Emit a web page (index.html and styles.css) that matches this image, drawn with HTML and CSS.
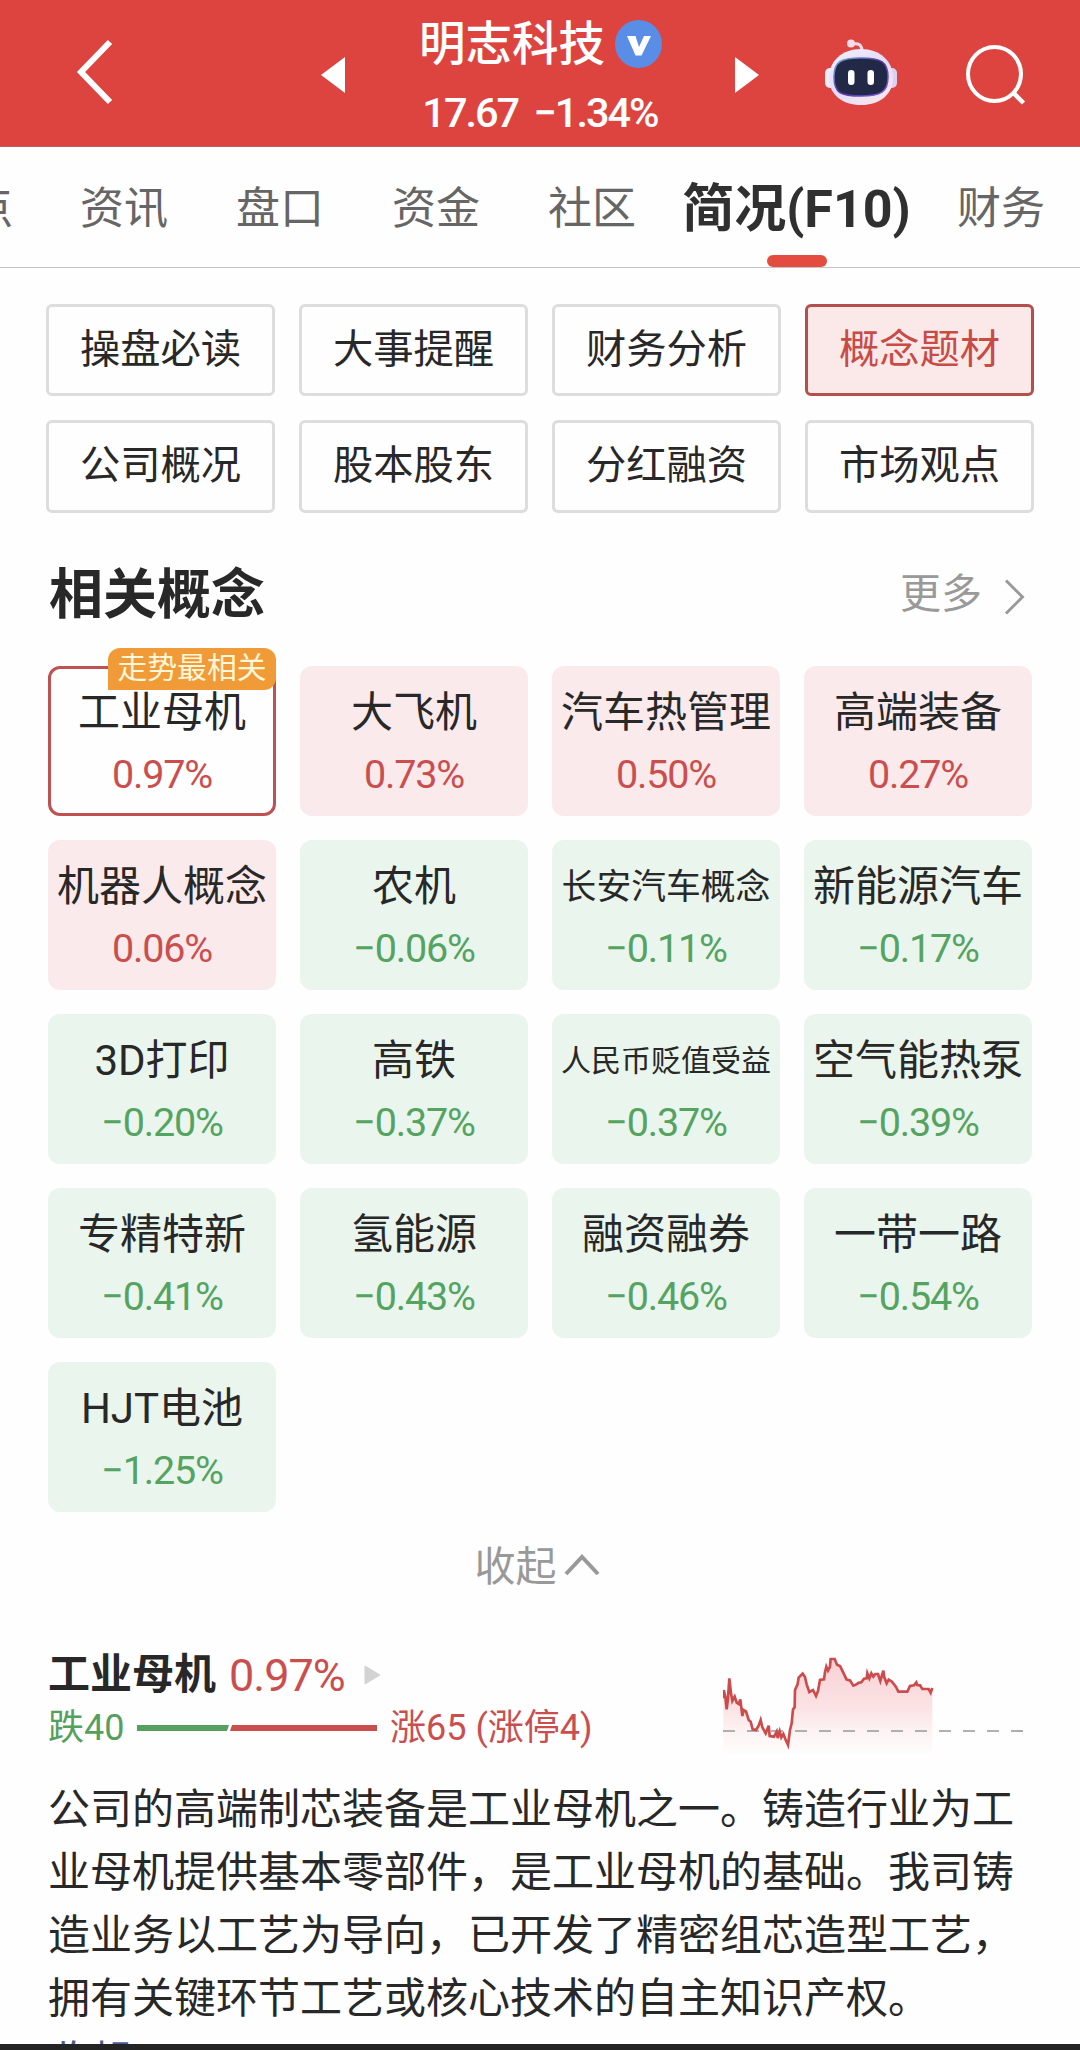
FILE: index.html
```html
<!DOCTYPE html>
<html lang="zh-CN">
<head>
<meta charset="utf-8">
<title>明志科技</title>
<link rel="stylesheet" href="styles.css">
</head>
<body>
<header class="topbar">
  <svg class="back" width="44" height="72" viewBox="0 0 44 72"><path d="M38 6 9 36 38 66" fill="none" stroke="#fff" stroke-width="6"/></svg>
  <svg class="prev" width="24" height="36" viewBox="0 0 24 36"><path d="M24 0V36L0 18Z" fill="#fff"/></svg>
  <div class="stock">
    <div class="stock-name">明志科技
      <svg width="47" height="48" viewBox="0 0 47 48"><ellipse cx="23.5" cy="24" rx="23.5" ry="24" fill="#598de6"/><path d="M12 16H20.500L24 27 29 16H36L26.500 35.500H20.500Z" fill="#fff"/></svg>
    </div>
    <div class="stock-price">17.67 −1.34%</div>
  </div>
  <svg class="next" width="24" height="36" viewBox="0 0 24 36"><path d="M0 0V36L24 18Z" fill="#fff"/></svg>
  <svg class="robot" width="72" height="67" viewBox="0 0 72 67">
    <defs>
      <linearGradient id="shell" x1="0" y1="0" x2="0.7" y2="1"><stop offset="0" stop-color="#f5f0fb"/><stop offset=".55" stop-color="#e2dcf8"/><stop offset="1" stop-color="#f8e6ee"/></linearGradient>
      <linearGradient id="rim" x1="0" y1="0" x2="1" y2="1"><stop offset="0" stop-color="#72b6d8"/><stop offset=".5" stop-color="#5633a0"/><stop offset="1" stop-color="#7b66ea"/></linearGradient>
    </defs>
    <path d="M27 5Q37 3 37 12" fill="none" stroke="#f6dbe4" stroke-width="3"/>
    <circle cx="26" cy="4.500" r="4" fill="#f4dce8"/>
    <rect x="0" y="29" width="12" height="20" rx="5" fill="#f3ebf8"/>
    <rect x="60" y="29" width="12" height="20" rx="5" fill="#dfcff3"/>
    <path d="M36 10C55 10 68 22 68 39S54 66 36 66 4 56 4 39 17 10 36 10Z" fill="url(#shell)"/>
    <path d="M36 19C56 19 63 23 63 38S56 57 36 57 9 54 9 38 16 19 36 19Z" fill="#222947" stroke="url(#rim)" stroke-width="1.500"/>
    <rect x="23" y="31" width="6.500" height="15" rx="3.250" fill="#fff"/><rect x="42.500" y="31" width="6.500" height="15" rx="3.250" fill="#fff"/>
  </svg>
  <svg class="search" width="60" height="62" viewBox="0 0 60 62"><ellipse cx="28.500" cy="30" rx="26.500" ry="27" fill="none" stroke="#fff" stroke-width="4"/><path d="M47.500 49 57.500 59" stroke="#fff" stroke-width="4.500"/></svg>
</header>

<nav class="tabs">
  <span class="tab tab-cut">点</span><span class="tab">资讯</span><span class="tab">盘口</span><span class="tab">资金</span><span class="tab">社区</span><span class="tab tab-active">简况(F10)</span><span class="tab">财务</span>
</nav>

<main>
  <section class="sections">
    <span class="chip">操盘必读</span><span class="chip">大事提醒</span><span class="chip">财务分析</span><span class="chip chip-on">概念题材</span>
    <span class="chip">公司概况</span><span class="chip">股本股东</span><span class="chip">分红融资</span><span class="chip">市场观点</span>
  </section>

  <div class="heading">
    <h2>相关概念</h2>
    <span class="more"><span>更多</span><svg width="22" height="36" viewBox="0 0 22 36"><path d="M2 1.500 18.500 18 2 34.500" fill="none" stroke="#999" stroke-width="3"/></svg></span>
  </div>

  <section class="concepts">
    <div class="tile up tile-on"><em class="flag">走势最相关</em><b>工业母机</b><i>0.97%</i></div>
    <div class="tile up"><b>大飞机</b><i>0.73%</i></div>
    <div class="tile up"><b>汽车热管理</b><i>0.50%</i></div>
    <div class="tile up"><b>高端装备</b><i>0.27%</i></div>
    <div class="tile up"><b>机器人概念</b><i>0.06%</i></div>
    <div class="tile down"><b>农机</b><i>−0.06%</i></div>
    <div class="tile down"><b class="six">长安汽车概念</b><i>−0.11%</i></div>
    <div class="tile down"><b>新能源汽车</b><i>−0.17%</i></div>
    <div class="tile down"><b>3D打印</b><i>−0.20%</i></div>
    <div class="tile down"><b>高铁</b><i>−0.37%</i></div>
    <div class="tile down"><b class="seven">人民币贬值受益</b><i>−0.37%</i></div>
    <div class="tile down"><b>空气能热泵</b><i>−0.39%</i></div>
    <div class="tile down"><b>专精特新</b><i>−0.41%</i></div>
    <div class="tile down"><b>氢能源</b><i>−0.43%</i></div>
    <div class="tile down"><b>融资融券</b><i>−0.46%</i></div>
    <div class="tile down"><b>一带一路</b><i>−0.54%</i></div>
    <div class="tile down"><b>HJT电池</b><i>−1.25%</i></div>
  </section>

  <div class="fold">收起<svg width="36" height="24" viewBox="0 0 36 24"><path d="M2 21 18 4 34 21" fill="none" stroke="#999" stroke-width="4"/></svg></div>

  <section class="detail">
    <div class="detail-info">
      <div class="detail-title"><h3>工业母机</h3><span class="rate">0.97%</span><svg width="17" height="20" viewBox="0 0 17 20"><path d="M1 1 16 10 1 19Z" fill="#d3d3d3" stroke="#d3d3d3" stroke-linejoin="round"/></svg></div>
      <div class="breadth"><span class="fall">跌40</span><svg width="240" height="6" viewBox="0 0 240 6"><path d="M0 0H92L90 6H0Z" fill="#55a05f"/><path d="M95 0H240V6H93Z" fill="#cb4e4f"/></svg><span class="rise">涨65 (涨停4)</span></div>
    </div>
    <svg class="chart" width="302" height="100" viewBox="69 75 906 300">
      <defs><linearGradient id="area" x1="0" y1="0" x2="0" y2="1"><stop offset="0" stop-color="#f8d0d4"/><stop offset=".5" stop-color="#fbe2e4"/><stop offset=".8" stop-color="#fdf5f5"/><stop offset="1" stop-color="#fefcfc"/></linearGradient></defs>
      <path d="M70 203V180L80 240 88 145 95 205 105 205 120 215 127 255 130 240 140 250 145 270 158 298 172 300 182 270 197 315 206 287 211 320 225 320 238 305 250 320 264 348 274 280 287 170 300 140 308 130 316 142 328 185 340 180 348 198 360 150 370 148 378 112 388 115 396 86 404 86 412 104 420 108 440 148 450 150 462 167 485 157 500 138 530 132 542 153 552 118 556 150 570 150 596 185 622 185 630 168 648 158 664 176 697 178V371H70Z" fill="url(#area)"/>
      <path d="M69 303H971" stroke="#999" stroke-width="5" stroke-dasharray="36 36"/>
      <path d="M71 205V180L76 200 80 238 84 205 88 145 93 190 97 213 104 200 110 218 116 222 121 208 127 258 131 240 138 244 146 270 152 275 158 298 168 300 176 287 182 270 187 292 197 310 206 287 209 318 222 320 230 305 233 324 239 304 244 322 250 312 256 327 264 345 270 300 275 280 279 238 284 232 285 180 293 162 296 143 308 131 315 141 320 163 328 186 339 180 348 198 354 183 360 150 372 148 375 126 379 110 384 122 390 110 392 87 404 87 411 104 420 108 428 124 438 145 440 149 450 151 460 167 468 164 476 158 484 157 492 146 500 145 502 130 508 145 514 130 520 140 526 132 534 132 541 153 550 122 553 142 560 160 566 149 576 155 588 171 595 185 622 185 630 168 642 166 649 157 652 165 660 166 667 177 686 177 692 188 697 174" fill="none" stroke="#cd4b4b" stroke-width="8"/>
    </svg>
  </section>

  <p class="summary">公司的高端制芯装备是工业母机之一。铸造行业为工<br>业母机提供基本零部件，是工业母机的基础。我司铸<br>造业务以工艺为导向，已开发了精密组芯造型工艺，<br>拥有关键环节工艺或核心技术的自主知识产权。</p>
  <div class="summary-fold">收起</div>
</main>
<footer class="edge"></footer>
</body>
</html>
```

FILE: styles.css
```css
* { box-sizing: border-box; }
body {
  margin: 0;
  width: 1080px;
  height: 2050px;
  overflow: hidden;
  display: flex;
  flex-direction: column;
  background: #fefefe;
  color: #282828;
  font-family: Roboto, "Noto Sans CJK SC", sans-serif;
}
svg { display: block; flex: none; }

.topbar {
  height: 147px;
  flex: none;
  display: flex;
  align-items: flex-start;
  background: #dd4440;
  border-bottom: 1px solid #b8605c;
  color: #fff;
}
.back { margin: 36px 0 0 72px; }
.prev { margin: 57px 0 0 205px; }
.stock { width: 390px; display: flex; flex-direction: column; align-items: center; }
.stock-name {
  display: flex;
  align-items: center;
  gap: 10px;
  margin-top: 10px;
  padding-left: 1px;
  height: 68px;
  font-size: 46.5px;
  font-weight: 500;
  line-height: 72px;
}
.stock-price {
  font-size: 41.500px;
  font-weight: 500;
  line-height: 69px;
  letter-spacing: -2px;
  word-spacing: 7px;
}
.next { margin-top: 57px; }
.robot { margin: 39px 0 0 66px; }
.search { margin: 44px 0 0 69px; }

.tabs {
  height: 121px;
  flex: none;
  display: flex;
  margin-left: -110px;
  border-bottom: 1px solid #c4c4c4;
  color: #666;
  font-size: 44px;
  line-height: 125px;
}
.tab { width: 156px; flex: none; text-align: center; white-space: nowrap; }
.tab-cut { padding-right: 33px; text-align: right; }
.tab-active {
  width: 253px;
  position: relative;
  color: #303030;
  font-size: 52px;
  font-weight: 700;
}
.tab-active::after {
  content: "";
  position: absolute;
  left: 97px;
  bottom: 0;
  width: 60px;
  height: 12px;
  border-radius: 6px;
  background: #e34c3f;
}

main { flex: 1; min-height: 0; overflow: hidden; }
.sections {
  display: grid;
  grid-template-columns: repeat(4, 229px);
  grid-template-rows: 92px 93px;
  gap: 24px;
  padding: 36px 46px 0;
}
.chip {
  border: 3px solid #ddd;
  border-radius: 6px;
  text-align: center;
  font-size: 40.300px;
  line-height: 86px;
}
.chip-on { border-color: #b4504c; background: #fbe9e9; color: #c84b45; }

.heading {
  display: flex;
  justify-content: space-between;
  align-items: center;
  height: 80px;
  margin: 42px 54px 0 49px;
}
h2 { margin: 0; font-size: 54px; font-weight: 700; line-height: 80px; padding-top: 2px; }
.more { display: flex; align-items: center; gap: 22px; color: #999; font-size: 41px; line-height: 60px; }
.more span { padding-bottom: 2px; }
.more svg { margin-top: 3px; }

.concepts {
  display: grid;
  grid-template-columns: repeat(4, 228px);
  grid-auto-rows: 150px;
  gap: 24px;
  padding: 31px 48px 0;
}
.tile {
  position: relative;
  display: flex;
  flex-direction: column;
  align-items: center;
  padding-top: 17px;
  border-radius: 12px;
  white-space: nowrap;
}
.tile b { font-size: 42px; font-weight: 400; line-height: 60px; }
.tile .six { font-size: 34.800px; }
.tile .seven { font-size: 30px; }
.tile i { font-size: 39.500px; font-style: normal; line-height: 63px; letter-spacing: -1.200px; }
.up { background: #faeaeb; }
.down { background: #eaf5ed; }
.up i { color: #cb4e4f; }
.down i { color: #55a361; }
.tile-on { padding-top: 14px; border: 3px solid #c05153; background: #fefefe; }
.flag {
  position: absolute;
  top: -21px;
  right: -3px;
  width: 168px;
  height: 42px;
  border-radius: 12px 12px 12px 0;
  background: #f19a38;
  color: #fff8d8;
  font-size: 29.800px;
  font-style: normal;
  line-height: 39px;
  text-align: center;
}

.fold {
  display: flex;
  justify-content: center;
  align-items: center;
  gap: 7px;
  height: 60px;
  margin: 21px 6px 0 0;
  color: #999;
  font-size: 41px;
}
.fold svg { margin-top: 3px; }

.detail { display: flex; justify-content: space-between; height: 112px; margin: 51px 55px 0 48px; }
.detail-info { padding-top: 3px; }
.detail-title { display: flex; align-items: center; height: 56px; }
h3 { margin: 0 13px 0 0; font-size: 42px; font-weight: 700; line-height: 56px; }
.rate { margin-right: 19px; color: #cb4e4f; font-size: 45px; letter-spacing: -1px; }
.breadth { display: flex; align-items: center; height: 50px; font-size: 36px; line-height: 44px; white-space: nowrap; }
.breadth svg { margin: 0 13px 0 12px; }
.fall { width: 77px; color: #55a05f; }
.rise { color: #cb4e4f; }
.chart { margin-top: 11px; }

.summary { margin: 22px 48px 0; font-size: 42px; line-height: 63px; white-space: nowrap; }
.summary-fold { margin: 0 48px; color: #4c5a9c; font-size: 42px; line-height: 63px; }
.edge { height: 6px; flex: none; background: #242424; }
```
